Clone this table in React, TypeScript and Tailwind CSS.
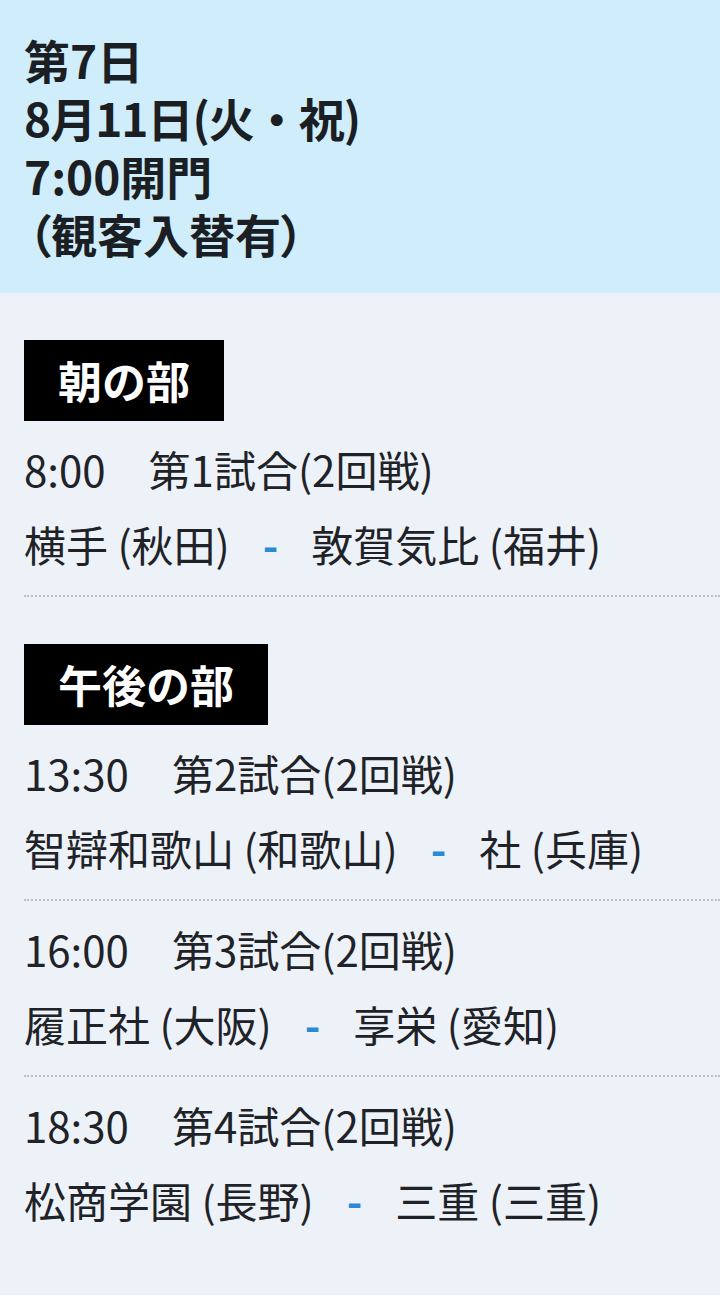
import React from "react";

type Match = { time: string; title: string; home: string; away: string };
type Section = { label: string; matches: Match[] };

const sections: Section[] = [
  {
    label: "朝の部",
    matches: [
      { time: "8:00", title: "第1試合(2回戦)", home: "横手 (秋田)", away: "敦賀気比 (福井)" },
    ],
  },
  {
    label: "午後の部",
    matches: [
      { time: "13:30", title: "第2試合(2回戦)", home: "智辯和歌山 (和歌山)", away: "社 (兵庫)" },
      { time: "16:00", title: "第3試合(2回戦)", home: "履正社 (大阪)", away: "享栄 (愛知)" },
      { time: "18:30", title: "第4試合(2回戦)", home: "松商学園 (長野)", away: "三重 (三重)" },
    ],
  },
];

const font = { fontFamily: '"Noto Sans CJK JP", "Noto Sans", sans-serif' };

export default function App() {
  return (
    <div className="w-[720px] bg-white" style={font}>
      <header className="bg-[#cfedfb] pl-6 pt-[30px] pb-[31px] text-[46px] leading-[58px] font-bold text-[#1b1f23]">
        <div>第7日</div>
        <div className="tracking-[-1px]">8月11日(火・祝)</div>
        <div>7:00開門</div>
        <div className="[font-feature-settings:'palt'] pl-[4px]">（観客入替有）</div>
      </header>
      <main className="bg-[#edf2f9] pl-6 pb-[44px]">
        {sections.map((s) => (
          <section key={s.label} className="pt-[47px]">
            <div className="inline-block bg-black px-[34px] py-[10px] text-[44px] leading-[61px] font-bold text-white">
              {s.label}
            </div>
            {s.matches.map((m, i) => (
              <div
                key={m.time}
                className={
                  "flex flex-col gap-[18px] pt-[19px] text-[42px] leading-[57px] text-[#1f2328] " +
                  (i === s.matches.length - 1 && s === sections[sections.length - 1]
                    ? "pb-[23px]"
                    : "pb-[23px] border-b-2 border-dotted border-[#bcbfc4]")
                }
              >
                <div className="whitespace-nowrap">
                  <span>{m.time}</span>
                  <span className="ml-[43px]">{m.title}</span>
                </div>
                <div className="whitespace-nowrap flex items-center">
                  <span>{m.home}</span>
                  <span className="mx-[33px] font-bold text-[#2a8ad3]">-</span>
                  <span>{m.away}</span>
                </div>
              </div>
            ))}
          </section>
        ))}
      </main>
    </div>
  );
}
